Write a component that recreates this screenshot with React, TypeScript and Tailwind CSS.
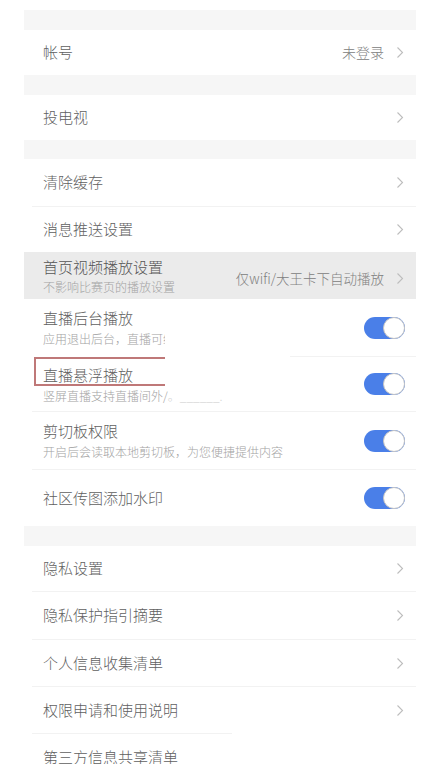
import React from 'react'

const font = { fontFamily: '"Noto Sans CJK SC", "Noto Sans", sans-serif' }

function Chevron() {
  return (
    <svg width="8" height="13" viewBox="0 0 8 13" className="shrink-0">
      <polyline points="1.5,1.5 6.5,6.5 1.5,11.5" fill="none" stroke="#bdbdbd" strokeWidth="1.1" />
    </svg>
  )
}

function Toggle() {
  return (
    <div className="w-[41px] h-[22px] rounded-full bg-[#4a7fe8] relative shrink-0">
      <div className="absolute right-0 top-0 w-[22px] h-[22px] rounded-full bg-white border border-[#c4c4c4]" />
    </div>
  )
}

function Band({ h }: { h: string }) {
  return <div className={`bg-[#f6f6f6] ${h}`} />
}

function Divider() {
  return <div className="h-px bg-[#f2f2f2] ml-2" />
}

function LinkRow({ title, value, h = 'h-[46px]', arrow = true }: { title: string; value?: string; h?: string; arrow?: boolean }) {
  return (
    <div className={`flex items-center justify-between pl-[19px] pr-3 ${h}`}>
      <span className="text-[15px] font-light text-[#5f5f5f]">{title}</span>
      <div className="flex items-center gap-3">
        {value && <span className="text-[14px] font-light text-[#808080]">{value}</span>}
        {arrow && <Chevron />}
      </div>
    </div>
  )
}

function SwitchRow({ title, sub, h = 'h-[56px]' }: { title: string; sub?: React.ReactNode; h?: string }) {
  return (
    <div className={`flex items-center justify-between pl-[19px] pr-[11px] ${h}`}>
      <div className="flex flex-col gap-[3px]">
        <span className="text-[15px] leading-[20px] font-light text-[#5f5f5f]">{title}</span>
        {sub && <span className="text-[12px] leading-[16px] font-light text-[#a3a3a3] whitespace-nowrap">{sub}</span>}
      </div>
      <Toggle />
    </div>
  )
}

export default function App() {
  return (
    <div className="w-[428px] h-[764px] overflow-hidden bg-white pl-6 pr-3 relative" style={font}>
      <div className="h-[10px]" />
      <Band h="h-[20px]" />
      <LinkRow title="帐号" value="未登录" h="h-[45px]" />
      <Band h="h-[20px]" />
      <LinkRow title="投电视" h="h-[45px]" />
      <Band h="h-[19px]" />
      <LinkRow title="清除缓存" h="h-[47px]" />
      <Divider />
      <LinkRow title="消息推送设置" h="h-[45px]" />

      <div className="flex items-center justify-between pl-[19px] pr-3 h-[47px] bg-[#ebebeb]">
        <div className="flex flex-col gap-[2px]">
          <span className="text-[15px] leading-[20px] font-light text-[#555555]">首页视频播放设置</span>
          <span className="text-[12px] leading-[16px] font-light text-[#a3a3a3]">不影响比赛页的播放设置</span>
        </div>
        <div className="flex items-center gap-3 pt-[6px]">
          <span className="text-[13.5px] font-light text-[#808080]">仅wifi/大王卡下自动播放</span>
          <Chevron />
        </div>
      </div>

      <SwitchRow
        title="直播后台播放"
        h="h-[57px]"
        sub={<span className="inline-block w-[122px] overflow-hidden align-bottom">应用退出后台，直播可继续播放</span>}
      />
      <div className="h-px ml-[266px] bg-[#f2f2f2]" />
      <SwitchRow
        title="直播悬浮播放"
        h="h-[54px]"
        sub={
          <span>
            竖屏直播支持直播间外/<span className="text-[#d0d0d0]">。______.</span>
          </span>
        }
      />
      <Divider />
      <SwitchRow title="剪切板权限" h="h-[57px]" sub="开启后会读取本地剪切板，为您便捷提供内容" />
      <Divider />
      <SwitchRow title="社区传图添加水印" h="h-[56px]" />
      <Band h="h-[20px]" />
      <LinkRow title="隐私设置" h="h-[45px]" />
      <Divider />
      <LinkRow title="隐私保护指引摘要" h="h-[47px]" />
      <Divider />
      <LinkRow title="个人信息收集清单" h="h-[46px]" />
      <Divider />
      <LinkRow title="权限申请和使用说明" h="h-[46px]" />
      <div className="h-px ml-2 w-[200px] bg-[#f2f2f2]" />
      <LinkRow title="第三方信息共享清单" h="h-[46px]" arrow={false} />

      {/* red annotation box */}
      <div className="absolute left-[34px] top-[357px] w-[131px] h-[29px] border-l-2 border-t-2 border-b-2 border-[#bf7878] pointer-events-none" />
    </div>
  )
}
